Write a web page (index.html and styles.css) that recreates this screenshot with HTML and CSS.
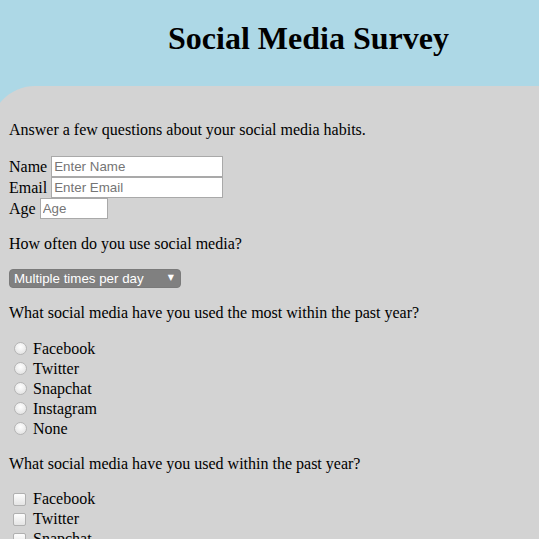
FILE: index.html
```html
<!DOCTYPE html>
<html>
<head>
<meta charset="utf-8">
<title>Social Media Survey</title>
<link rel="stylesheet" href="styles.css">
</head>
<body>
<header class="top">
  <h1 class="title">Social Media Survey</h1>
</header>
<main class="survey">
  <p class="q">Answer a few questions about your social media habits.</p>
  <form class="form">
    <div class="field"><label class="lbl" for="name">Name</label><input class="txt txt-long" id="name" type="text" placeholder="Enter Name"></div>
    <div class="field"><label class="lbl" for="email">Email</label><input class="txt txt-long" id="email" type="text" placeholder="Enter Email"></div>
    <div class="field"><label class="lbl" for="age">Age</label><input class="txt txt-short" id="age" type="text" placeholder="Age"></div>

    <p class="q">How often do you use social media?</p>
    <div class="sel-wrap">
      <select class="sel">
        <option>Multiple times per day</option>
        <option>Once per day</option>
        <option>A few times per week</option>
        <option>Rarely</option>
      </select>
    </div>

    <p class="q">What social media have you used the most within the past year?</p>
    <div class="opts">
      <label class="opt"><input class="radio" type="radio" name="most"><span>Facebook</span></label>
      <label class="opt"><input class="radio" type="radio" name="most"><span>Twitter</span></label>
      <label class="opt"><input class="radio" type="radio" name="most"><span>Snapchat</span></label>
      <label class="opt"><input class="radio" type="radio" name="most"><span>Instagram</span></label>
      <label class="opt"><input class="radio" type="radio" name="most"><span>None</span></label>
    </div>

    <p class="q">What social media have you used within the past year?</p>
    <div class="opts">
      <label class="opt"><input class="check" type="checkbox"><span>Facebook</span></label>
      <label class="opt"><input class="check" type="checkbox"><span>Twitter</span></label>
      <label class="opt"><input class="check" type="checkbox"><span>Snapchat</span></label>
      <label class="opt"><input class="check" type="checkbox"><span>Instagram</span></label>
      <label class="opt"><input class="check" type="checkbox"><span>None</span></label>
    </div>
  </form>
</main>
</body>
</html>
```

FILE: styles.css
```css
html, body {
  margin: 0;
  padding: 0;
}
body {
  background: #add8e6;
  font-family: "Liberation Serif", "Times New Roman", serif;
  font-size: 16px;
  color: #000;
  overflow: hidden;
}
.top {
  padding: 20px 0 29px 78px;
}
.title {
  margin: 0;
  text-align: center;
  font-size: 32px;
  line-height: 37px;
  font-weight: bold;
}
.survey {
  margin-left: -10px;
  background: #d3d3d3;
  border-top-left-radius: 45px;
  padding: 35px 0 40px 19px;
  min-height: 600px;
}
.q {
  margin: 0 0 16px 0;
  line-height: 18.5px;
}
.form .q {
  margin-top: 16px;
}
.field {
  height: 21px;
  display: flex;
  align-items: center;
}
.lbl {
  line-height: 21px;
}
.txt {
  box-sizing: border-box;
  height: 21px;
  border: 1px solid #a9a9a9;
  padding: 1px 2px;
  margin: 0 0 0 4px;
  font-family: "Liberation Sans", Arial, sans-serif;
  font-size: 13.33px;
  background: #fff;
  outline: none;
}
.txt::placeholder {
  color: #757575;
}
.txt-long {
  width: 172px;
}
.txt-short {
  width: 68px;
}
.sel-wrap {
  position: relative;
  width: 172px;
  height: 19px;
}
.sel-wrap::after {
  content: "\25BC";
  position: absolute;
  right: 7px;
  top: 4px;
  font-family: "DejaVu Sans", sans-serif;
  font-size: 8px;
  color: #fff;
  pointer-events: none;
}
.sel {
  -webkit-appearance: none;
  appearance: none;
  box-sizing: border-box;
  width: 172px;
  height: 19px;
  margin: 0;
  padding: 0 0 0 4px;
  border: 1px solid #7a7a7a;
  border-radius: 4px;
  background: #808080;
  color: #fff;
  font-family: "Liberation Sans", Arial, sans-serif;
  font-size: 13.33px;
  font-weight: normal;
  outline: none;
}
.opts {
  display: flex;
  flex-direction: column;
}
.opt {
  display: flex;
  align-items: center;
  height: 20px;
}
.radio {
  -webkit-appearance: none;
  appearance: none;
  box-sizing: border-box;
  width: 13px;
  height: 13px;
  margin: 0 6px 0 5px;
  border: 1px solid #b5b5b5;
  border-radius: 50%;
  background: radial-gradient(circle at 50% 35%, #ffffff 0%, #f2f2f2 40%, #dcdcdc 100%);
  flex: none;
}
.check {
  -webkit-appearance: none;
  appearance: none;
  box-sizing: border-box;
  width: 13px;
  height: 13px;
  margin: 0 7px 0 4px;
  border: 1px solid #b0b0b0;
  border-radius: 2px;
  background: linear-gradient(#fdfdfd, #e4e4e4);
  flex: none;
}
```
